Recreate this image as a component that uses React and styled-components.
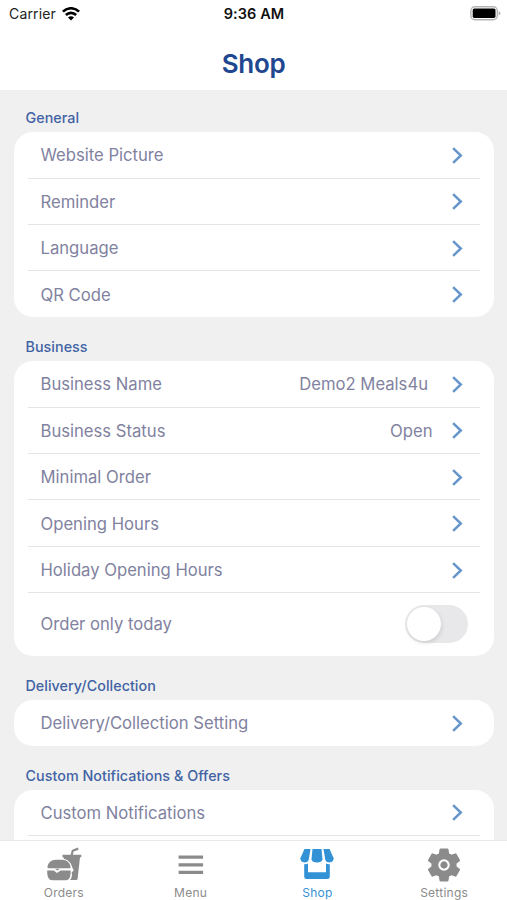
import React, { useState } from "react";
import styled, { createGlobalStyle } from "styled-components";

const sections = [
    {
        title: "General",
        height: 185,
        rows: [
            { label: "Website Picture" },
            { label: "Reminder" },
            { label: "Language" },
            { label: "QR Code" },
        ],
    },
    {
        title: "Business",
        height: 295,
        rows: [
            { label: "Business Name", value: "Demo2 Meals4u", gap: 24 },
            { label: "Business Status", value: "Open", gap: 19.5 },
            { label: "Minimal Order" },
            { label: "Opening Hours" },
            { label: "Holiday Opening Hours" },
            { label: "Order only today", toggle: true },
        ],
    },
    {
        title: "Delivery/Collection",
        height: 45.5,
        rows: [{ label: "Delivery/Collection Setting" }],
    },
    {
        title: "Custom Notifications & Offers",
        height: 140,
        rows: [{ label: "Custom Notifications", divider: true }],
    },
];

const tabs = [
    { name: "Orders", icon: OrdersIcon },
    { name: "Menu", icon: MenuIcon },
    { name: "Shop", icon: ShopIcon },
    { name: "Settings", icon: SettingsIcon },
];

function WifiIcon() {
    return (
        <svg width="18" height="14" viewBox="0 0 18 14" fill="none" stroke="#000" strokeWidth="2.6">
            <path d="M0.9 4.7C5.4 0.1 12.6 0.1 17.1 4.7" />
            <path d="M3.9 8C6.8 5.1 11.2 5.1 14.1 8" />
            <path d="M9 13.4L6 10.4C7.7 8.8 10.3 8.8 12 10.4Z" fill="#000" stroke="none" />
        </svg>
    );
}

function BatteryIcon() {
    return (
        <svg width="31" height="15" viewBox="0 0 31 15">
            <rect x="0.9" y="0.7" width="26.4" height="13" rx="4" fill="#fff" stroke="#b4b4b4" strokeWidth="1.4" />
            <rect x="2.7" y="2.5" width="22.8" height="9.4" rx="1.6" fill="#000" />
            <path d="M28.6 5Q30.5 5.8 30.5 7.2T28.6 9.4Z" fill="#b4b4b4" />
        </svg>
    );
}

function Chevron() {
    return (
        <svg width="11" height="17" viewBox="0 0 11 17" fill="none" stroke="#6696cb" strokeWidth="2.5">
            <path d="M1.1 1.2L8.8 8.5L1.1 15.8" />
        </svg>
    );
}

function OrdersIcon() {
    return (
        <svg width="36" height="36" viewBox="0 0 36 36" fill="currentColor">
            <path d="M16.5 7.8H35.3V10.2H34L31.6 31.8Q31.4 33 30.2 33H24Q26 30.7 26 27.8L25.6 25.6L27.8 23.2L26.4 20.7Q25 13.6 17.8 11.8L17.5 10.2H16.5Z" />
            <path d="M25.6 8.4L26.7 3.7L32.3 1.6" fill="none" stroke="currentColor" strokeWidth="2.2" />
            <path d="M1.4 20Q2.6 13 9.7 12.8H16.2Q23.3 13 24.6 20Q24.6 21.3 23.1 21.3H2.9Q1.4 21.3 1.4 20Z" />
            <path d="M1.2 23.6H7.8L11 25.9L14.6 23.6H24.6V26.4Q24.1 33.3 19.3 33.3H6.7Q1.9 33.3 1.2 26.4Z" />
            <path d="M8.8 21.8H14L11.3 23.6Z" />
        </svg>
    );
}

function MenuIcon() {
    return (
        <svg width="36" height="36" viewBox="0 0 36 36" stroke="currentColor" strokeWidth="3.2">
            <path d="M5.6 10.2H30.1M5.6 17.8H30.1M5.6 25.4H30.1" />
        </svg>
    );
}

function ShopIcon() {
    return (
        <svg width="36" height="36" viewBox="0 0 36 36" fill="currentColor">
            <path d="M5.4 2.1H11.5L9.7 13Q8.7 15.5 5.6 15.5Q1.3 15.3 1.4 11.3Z" />
            <path d="M13.5 2.1H22.5L23.5 12.3Q22.8 15.5 18 15.5Q13.2 15.5 12.5 12.3Z" />
            <path d="M24.5 2.1H30.6L34.6 11.3Q34.7 15.3 30.4 15.5Q27.3 15.5 26.3 13Z" />
            <path d="M5.2 17.1Q7.3 17.6 9 16.6V25.2H27V16.6Q28.7 17.6 30.8 17.1V29.7Q30.8 32 28.5 32H7.5Q5.2 32 5.2 29.7Z" />
        </svg>
    );
}

function SettingsIcon() {
    return (
        <svg width="36" height="36" viewBox="-18 -18 36 36" fill="currentColor">
            <circle r="12.4" />
            {[0, 60, 120, 180, 240, 300].map((angle) => (
                <path
                    key={angle}
                    transform={`rotate(${angle})`}
                    d="M-6.9 -9.5L-5.1 -11.6L-4.5 -15.4Q-4.3 -16.4 -3.3 -16.4H3.3Q4.3 -16.4 4.5 -15.4L5.1 -11.6L6.9 -9.5Z"
                />
            ))}
            <circle r="4.7" fill="none" stroke="#fff" strokeWidth="2.1" />
        </svg>
    );
}

export default function App() {
    const [onlyToday, setOnlyToday] = useState(false);
    const [curTab, setCurTab] = useState("Shop");

    return (
        <Screen>
            <GlobalStyle />
            <StatusBar>
                <Carrier>
                    Carrier <WifiIcon />
                </Carrier>
                <Clock>9:36 AM</Clock>
                <Battery>
                    <BatteryIcon />
                </Battery>
            </StatusBar>
            <Title>Shop</Title>
            <Content>
                {sections.map((section) => (
                    <section key={section.title}>
                        <SectionTitle>{section.title}</SectionTitle>
                        <Card $height={section.height}>
                            {section.rows.map((row) => (
                                <Row key={row.label} $tall={row.toggle} $divider={row.divider}>
                                    <Label>{row.label}</Label>
                                    {row.value && <Value $gap={row.gap}>{row.value}</Value>}
                                    {row.toggle ? (
                                        <Switch
                                            role="switch"
                                            aria-checked={onlyToday}
                                            $on={onlyToday}
                                            onClick={() => setOnlyToday(!onlyToday)}
                                        />
                                    ) : (
                                        <Chevron />
                                    )}
                                </Row>
                            ))}
                        </Card>
                    </section>
                ))}
            </Content>
            <TabBar>
                {tabs.map(({ name, icon: Icon }) => (
                    <Tab key={name} $active={name === curTab} onClick={() => setCurTab(name)}>
                        <Icon />
                        <span>{name}</span>
                    </Tab>
                ))}
            </TabBar>
        </Screen>
    );
}

const GlobalStyle = createGlobalStyle`
    * {
        box-sizing: border-box;
    }
    body {
        margin: 0;
        overflow: hidden;
    }
`;

const Screen = styled.div`
    display: flex;
    flex-direction: column;
    height: 100vh;
    overflow: hidden;
    background-color: #fff;
    font-family: Inter, "Liberation Sans", sans-serif;
`;

const StatusBar = styled.div`
    display: grid;
    grid-template-columns: 1fr auto 1fr;
    align-items: center;
    flex: none;
    height: 27px;
    padding: 0 6px 0 9px;
    font-size: 14px;
    color: #222;
`;

const Carrier = styled.div`
    display: flex;
    align-items: center;
    gap: 6px;
    letter-spacing: 0.15px;
`;

const Clock = styled.div`
    font-size: 14.5px;
    font-weight: 600;
    letter-spacing: 0.1px;
    color: #111;
    margin-right: 2px;
`;

const Battery = styled.div`
    display: flex;
    justify-content: flex-end;
`;

const Title = styled.h1`
    flex: none;
    height: 63px;
    margin: 0;
    line-height: 74px;
    text-align: center;
    font-size: 26px;
    font-weight: 600;
    letter-spacing: -0.3px;
    color: #20478f;
`;

const Content = styled.main`
    flex: 1;
    min-height: 0;
    overflow: hidden;
    padding: 12.3px 13px 0 14px;
    background-color: #f0f0f0;
`;

const SectionTitle = styled.h2`
    height: 30px;
    margin: 0;
    padding-left: 11.5px;
    line-height: 31.6px;
    font-size: 14.3px;
    font-weight: 500;
    letter-spacing: 0.05px;
    color: #4163a4;
`;

const Card = styled.div`
    height: ${({ $height }) => $height}px;
    margin-bottom: 14px;
    padding: 0 14px;
    border-radius: 19px;
    background-color: #fff;
`;

const Row = styled.div`
    display: flex;
    align-items: center;
    height: ${({ $tall }) => ($tall ? 62 : 46.4)}px;
    padding: 1px ${({ $tall }) => ($tall ? 12.5 : 17)}px 0 12.5px;
    border-bottom: 1.5px solid #e5e5e8;
    font-size: 16.65px;
    color: #8182a0;
    &:last-child {
        border-bottom-color: ${({ $divider }) => ($divider ? "#e5e5e8" : "transparent")};
    }
`;

const Label = styled.span`
    margin-right: auto;
`;

const Value = styled.span`
    margin-right: ${({ $gap }) => $gap}px;
`;

const Switch = styled.button`
    display: flex;
    justify-content: ${({ $on }) => ($on ? "flex-end" : "flex-start")};
    width: 62.5px;
    height: 38px;
    padding: 2px;
    border: none;
    border-radius: 19px;
    background-color: ${({ $on }) => ($on ? "#2f8fd3" : "#e8e8ea")};
    cursor: pointer;
    &::before {
        content: "";
        width: 34px;
        height: 34px;
        border-radius: 50%;
        background-color: #fff;
        box-shadow: 1px 2px 4px #0000001c;
    }
`;

const TabBar = styled.nav`
    display: grid;
    grid-template-columns: repeat(4, 1fr);
    flex: none;
    height: 60px;
    border-top: 1px solid #e9e9e9;
    background-color: #fff;
`;

const Tab = styled.button`
    display: flex;
    flex-direction: column;
    align-items: center;
    padding: 6px 0 0 1px;
    border: none;
    background: none;
    font-family: inherit;
    font-size: 12px;
    line-height: 19px;
    letter-spacing: 0.25px;
    color: ${({ $active }) => ($active ? "#3392d6" : "#8b8b8b")};
    cursor: pointer;
`;
